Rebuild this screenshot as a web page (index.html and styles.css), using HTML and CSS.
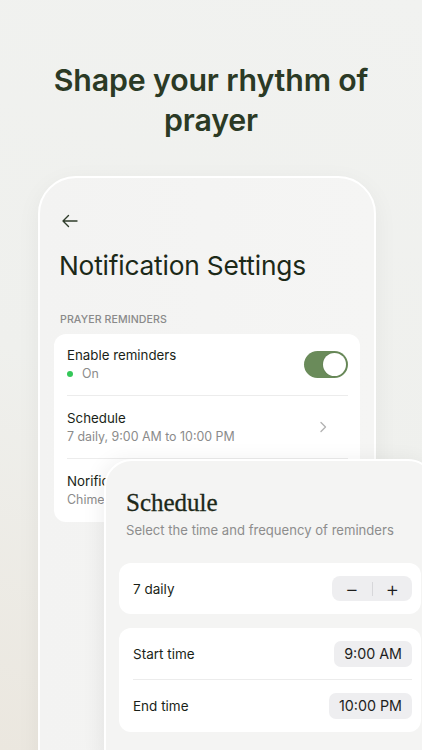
FILE: index.html
```html
<!DOCTYPE html>
<html>
<head>
<meta charset="utf-8">
<link rel="stylesheet" href="styles.css">
</head>
<body>
<div class="stage">
  <h1 class="headline">Shape your rhythm of<br>prayer</h1>
  <div class="phone">
    <div class="back">
      <svg width="18" height="14" viewBox="0 0 18 14"><path d="M16 7H2M7.5 1.5L2 7l5.5 5.5" fill="none" stroke="#2f3d2a" stroke-width="1.4" stroke-linecap="round" stroke-linejoin="round"/></svg>
    </div>
    <h2 class="title">Notification Settings</h2>
    <div class="section-label">PRAYER REMINDERS</div>
    <div class="group">
      <div class="row">
        <div class="row-text">
          <div class="row-title">Enable reminders</div>
          <div class="row-sub"><span class="dot"></span>On</div>
        </div>
        <div class="toggle"><div class="knob"></div></div>
      </div>
      <div class="row">
        <div class="row-text">
          <div class="row-title">Schedule</div>
          <div class="row-sub">7 daily, 9:00 AM to 10:00 PM</div>
        </div>
        <svg class="chev" width="8" height="12" viewBox="0 0 8 12"><path d="M2 1.5L6.5 6 2 10.5" fill="none" stroke="#b3b3b3" stroke-width="1.4" stroke-linecap="round" stroke-linejoin="round"/></svg>
      </div>
      <div class="row">
        <div class="row-text">
          <div class="row-title">Norifications sound</div>
          <div class="row-sub">Chime</div>
        </div>
      </div>
    </div>
  </div>
  <div class="sheet">
    <h3 class="sheet-title">Schedule</h3>
    <div class="sheet-sub">Select the time and frequency of reminders</div>
    <div class="card">
      <div class="card-row">
        <span>7 daily</span>
        <div class="stepper"><span class="step">−</span><span class="step-div"></span><span class="step">+</span></div>
      </div>
    </div>
    <div class="card">
      <div class="card-row">
        <span>Start time</span>
        <span class="pill">9:00 AM</span>
      </div>
      <div class="card-row">
        <span>End time</span>
        <span class="pill">10:00 PM</span>
      </div>
    </div>
  </div>
</div>
</body>
</html>
```

FILE: styles.css
```css
html, body {
  margin: 0;
  padding: 0;
}
body {
  width: 422px;
  height: 750px;
  overflow: hidden;
  font-family: Inter, "Noto Sans", sans-serif;
}
.stage {
  position: relative;
  width: 422px;
  height: 750px;
  overflow: hidden;
  background: linear-gradient(200deg, #f1f2f0 0%, #eff0ed 55%, #ebe7df 100%);
}
.headline {
  margin: 0;
  padding-top: 60px;
  text-align: center;
  font-size: 30.3px;
  line-height: 40px;
  font-weight: 600;
  letter-spacing: -0.15px;
  color: #2b3a25;
}
.phone {
  margin: 36px 0 0 38px;
  width: 338px;
  height: 640px;
  box-sizing: border-box;
  padding: 36px 14px 0 14px;
  background: linear-gradient(90deg, #f3f3f2 0%, #f5f5f4 100%);
  border: 2px solid #ffffff;
  border-radius: 38px;
  box-shadow: 0 6px 24px rgba(0, 0, 0, 0.05);
}
.back {
  height: 14px;
  padding-left: 7px;
  display: flex;
  align-items: center;
}
.title {
  margin: 21px 0 0 5px;
  font-size: 26.3px;
  line-height: 34px;
  font-weight: 400;
  color: #1c2918;
  letter-spacing: -0.2px;
}
.section-label {
  margin: 30px 0 0 6px;
  font-size: 10.6px;
  line-height: 14px;
  color: #8a8a8a;
  letter-spacing: 0.1px;
  font-weight: 500;
}
.group {
  margin-top: 7px;
  background: #ffffff;
  border-radius: 12px;
  padding: 0 12px 0 13px;
  height: 188px;
  overflow: hidden;
}
.row {
  display: flex;
  align-items: center;
  justify-content: space-between;
  height: 62px;
  border-bottom: 1px solid #ececec;
}
.row:first-child {
  height: 61px;
}
.row:last-child {
  border-bottom: none;
}
.row-title {
  font-size: 13.3px;
  line-height: 18px;
  color: #1a1f18;
}
.row-sub {
  font-size: 12.4px;
  line-height: 18px;
  color: #8b8b8b;
  margin-top: 1px;
  display: flex;
  align-items: center;
}
.dot {
  width: 6px;
  height: 6px;
  border-radius: 50%;
  background: #34c759;
  margin-right: 9px;
}
.toggle {
  width: 44px;
  height: 27px;
  border-radius: 14px;
  background: #6a8b5a;
  position: relative;
}
.knob {
  position: absolute;
  right: 2px;
  top: 2px;
  width: 23px;
  height: 23px;
  border-radius: 50%;
  background: #ffffff;
  box-shadow: 0 0 0 1px rgba(0, 0, 0, 0.05);
}
.chev {
  margin-right: 21px;
}
.sheet {
  position: absolute;
  left: 104px;
  top: 459px;
  width: 332px;
  height: 320px;
  box-sizing: border-box;
  padding: 28px 13px 0 13px;
  background: #f4f4f3;
  border: 2px solid #ffffff;
  border-radius: 28px;
  box-shadow: -4px 0 20px rgba(0, 0, 0, 0.06);
}
.sheet-title {
  margin: 0 0 0 7px;
  font-family: "Liberation Serif", "DejaVu Serif", serif;
  font-weight: 400;
  font-size: 25px;
  line-height: 28px;
  color: #1d2819;
  -webkit-text-stroke: 0.3px #1d2819;
}
.sheet-sub {
  margin: 4px 0 0 7px;
  font-size: 13.1px;
  line-height: 18px;
  color: #8d8d8d;
}
.card {
  margin-top: 24px;
  background: #ffffff;
  border-radius: 12px;
  padding: 0 9px 0 14px;
  width: 302px;
  box-sizing: border-box;
}
.card + .card {
  margin-top: 14px;
}
.card-row {
  height: 51px;
  display: flex;
  align-items: center;
  justify-content: space-between;
  font-size: 13.5px;
  color: #1a1f18;
}
.card-row + .card-row {
  border-top: 1px solid #ececec;
  height: 52px;
}
.stepper {
  display: flex;
  align-items: center;
  background: #eeeef0;
  border-radius: 8px;
  height: 25px;
  width: 80px;
}
.step {
  flex: 1;
  text-align: center;
  font-size: 21px;
  line-height: 25px;
  color: #1e1e1e;
  font-weight: 300;
}
.step-div {
  width: 1px;
  height: 14px;
  background: #d7d7da;
}
.pill {
  background: #eeeef0;
  border-radius: 7px;
  padding: 0 10px;
  height: 26px;
  line-height: 26px;
  font-size: 14.3px;
  color: #1e1e1e;
}
```
